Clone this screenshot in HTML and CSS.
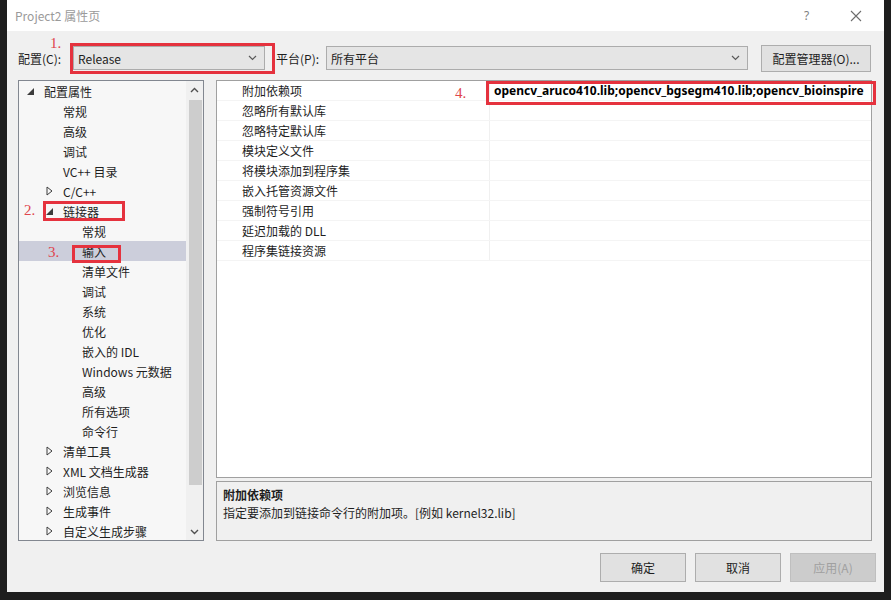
FILE: index.html
```html
<!DOCTYPE html>
<html>
<head>
  <title>Project2 属性页</title>
  <link rel="stylesheet" href="styles.css">
</head>
<body>

<div class="dialog">
  <div class="titlebar">
    <span class="title">Project2 属性页</span>
    <span class="help">?</span>
    <span class="close">
      <svg width="12" height="12" viewBox="0 0 12 12"><path d="M1 1 L11 11 M11 1 L1 11" stroke="#6d6d6d" stroke-width="1.1" fill="none"/></svg>
    </span>
  </div>

  <div class="configRow">
    <span class="fieldLabel">配置(C):</span>
    <div class="combo comboConfig">
      <span>Release</span>
      <svg class="chevron" width="9" height="6" viewBox="0 0 9 6"><path d="M1 1 L4.5 4.5 L8 1" stroke="#5a5a5a" stroke-width="1.2" fill="none"/></svg>
    </div>
    <span class="fieldLabel platformLabel">平台(P):</span>
    <div class="combo comboPlatform">
      <span>所有平台</span>
      <svg class="chevron" width="9" height="6" viewBox="0 0 9 6"><path d="M1 1 L4.5 4.5 L8 1" stroke="#5a5a5a" stroke-width="1.2" fill="none"/></svg>
    </div>
    <div class="btn btnManager">配置管理器(O)...</div>
  </div>

  <div class="main">
    <div class="tree">
      <div class="treeList">
        <div class="treeRow lvl0"><span class="exp"><svg width="7" height="7" viewBox="0 0 7 7"><path d="M7 0 L7 7 L0 7 Z" fill="#3c3c3c"/></svg></span>配置属性</div>
        <div class="treeRow lvl1"><span class="exp"></span>常规</div>
        <div class="treeRow lvl1"><span class="exp"></span>高级</div>
        <div class="treeRow lvl1"><span class="exp"></span>调试</div>
        <div class="treeRow lvl1"><span class="exp"></span>VC++ 目录</div>
        <div class="treeRow lvl1"><span class="exp"><svg width="7" height="10" viewBox="0 0 7 10"><path d="M1 1 L6 5 L1 9 Z" stroke="#3c3c3c" stroke-width="1" fill="none"/></svg></span>C/C++</div>
        <div class="treeRow lvl1"><span class="exp"><svg width="7" height="7" viewBox="0 0 7 7"><path d="M7 0 L7 7 L0 7 Z" fill="#3c3c3c"/></svg></span>链接器</div>
        <div class="treeRow lvl2"><span class="exp"></span>常规</div>
        <div class="treeRow lvl2 selected"><span class="exp"></span>输入</div>
        <div class="treeRow lvl2"><span class="exp"></span>清单文件</div>
        <div class="treeRow lvl2"><span class="exp"></span>调试</div>
        <div class="treeRow lvl2"><span class="exp"></span>系统</div>
        <div class="treeRow lvl2"><span class="exp"></span>优化</div>
        <div class="treeRow lvl2"><span class="exp"></span>嵌入的 IDL</div>
        <div class="treeRow lvl2"><span class="exp"></span>Windows 元数据</div>
        <div class="treeRow lvl2"><span class="exp"></span>高级</div>
        <div class="treeRow lvl2"><span class="exp"></span>所有选项</div>
        <div class="treeRow lvl2"><span class="exp"></span>命令行</div>
        <div class="treeRow lvl1"><span class="exp"><svg width="7" height="10" viewBox="0 0 7 10"><path d="M1 1 L6 5 L1 9 Z" stroke="#3c3c3c" stroke-width="1" fill="none"/></svg></span>清单工具</div>
        <div class="treeRow lvl1"><span class="exp"><svg width="7" height="10" viewBox="0 0 7 10"><path d="M1 1 L6 5 L1 9 Z" stroke="#3c3c3c" stroke-width="1" fill="none"/></svg></span>XML 文档生成器</div>
        <div class="treeRow lvl1"><span class="exp"><svg width="7" height="10" viewBox="0 0 7 10"><path d="M1 1 L6 5 L1 9 Z" stroke="#3c3c3c" stroke-width="1" fill="none"/></svg></span>浏览信息</div>
        <div class="treeRow lvl1"><span class="exp"><svg width="7" height="10" viewBox="0 0 7 10"><path d="M1 1 L6 5 L1 9 Z" stroke="#3c3c3c" stroke-width="1" fill="none"/></svg></span>生成事件</div>
        <div class="treeRow lvl1"><span class="exp"><svg width="7" height="10" viewBox="0 0 7 10"><path d="M1 1 L6 5 L1 9 Z" stroke="#3c3c3c" stroke-width="1" fill="none"/></svg></span>自定义生成步骤</div>
      </div>
      <div class="scrollbar">
        <div class="scrollArrow"><svg width="9" height="6" viewBox="0 0 9 6"><path d="M1 5 L4.5 1.5 L8 5" stroke="#505050" stroke-width="1.4" fill="none"/></svg></div>
        <div class="scrollTrack"><div class="scrollThumb"></div></div>
        <div class="scrollArrow"><svg width="9" height="6" viewBox="0 0 9 6"><path d="M1 1 L4.5 4.5 L8 1" stroke="#505050" stroke-width="1.4" fill="none"/></svg></div>
      </div>
    </div>

    <div class="props">
      <div class="grid">
        <div class="gridRow"><div class="propName">附加依赖项</div><div class="propValue">opencv_aruco410.lib;opencv_bgsegm410.lib;opencv_bioinspire</div></div>
        <div class="gridRow"><div class="propName">忽略所有默认库</div><div class="propValue"></div></div>
        <div class="gridRow"><div class="propName">忽略特定默认库</div><div class="propValue"></div></div>
        <div class="gridRow"><div class="propName">模块定义文件</div><div class="propValue"></div></div>
        <div class="gridRow"><div class="propName">将模块添加到程序集</div><div class="propValue"></div></div>
        <div class="gridRow"><div class="propName">嵌入托管资源文件</div><div class="propValue"></div></div>
        <div class="gridRow"><div class="propName">强制符号引用</div><div class="propValue"></div></div>
        <div class="gridRow"><div class="propName">延迟加载的 DLL</div><div class="propValue"></div></div>
        <div class="gridRow"><div class="propName">程序集链接资源</div><div class="propValue"></div></div>
      </div>
      <div class="desc">
        <div class="descTitle">附加依赖项</div>
        <div class="descText">指定要添加到链接命令行的附加项。[例如 kernel32.lib]</div>
      </div>
    </div>
  </div>

  <div class="buttons">
    <div class="btn btnDialog">确定</div>
    <div class="btn btnDialog">取消</div>
    <div class="btn btnDialog disabled">应用(A)</div>
  </div>

  <!-- red markers drawn over the screenshot -->
  <span class="mark num1">1.</span>
  <span class="markBox box1"></span>
  <span class="mark num2">2.</span>
  <span class="markBox box2"></span>
  <span class="mark num3">3.</span>
  <span class="markBox box3"></span>
  <span class="mark num4">4.</span>
  <span class="markBox box4"></span>
</div>

</body>
</html>
```

FILE: styles.css
```css
html, body {
  margin: 0;
  padding: 0;
}

body {
  background-color: #1e1e1e;
  width: 891px;
  height: 600px;
  overflow: hidden;
  font-family: "Noto Sans CJK SC", "Noto Sans", sans-serif;
  font-size: 12px;
  color: #1e1e1e;
}

.dialog {
  position: relative;
  margin-left: 7px;
  width: 877px;
  height: 592px;
  background-color: #f0f0f0;
  display: flex;
  flex-direction: column;
}

.titlebar {
  height: 31px;
  background-color: #ffffff;
  display: flex;
  align-items: center;
  padding-left: 8px;
  flex-shrink: 0;
}

.title {
  color: #9a9a9a;
  font-size: 12px;
  flex: 1;
}

.help {
  color: #808080;
  font-family: "Noto Sans", sans-serif;
  font-size: 12px;
  width: 20px;
  margin-right: 26px;
}

.close {
  display: flex;
  width: 24px;
  margin-right: 10px;
}

.configRow {
  display: flex;
  align-items: center;
  padding: 15px 0 0 11px;
  height: 24px;
  flex-shrink: 0;
}

.fieldLabel {
  width: 55px;
}

.platformLabel {
  margin-left: 11px;
  width: 50px;
}

.combo {
  height: 24px;
  box-sizing: border-box;
  border: 1px solid #acacac;
  background-color: #e5e5e5;
  display: flex;
  align-items: center;
  padding-left: 4px;
  padding-right: 7px;
}

.combo span {
  flex: 1;
}

.comboConfig {
  width: 192px;
}

.comboPlatform {
  width: 422px;
}

.btn {
  box-sizing: border-box;
  border: 1px solid #adadad;
  background-color: #e1e1e1;
  display: flex;
  align-items: center;
  justify-content: center;
  flex-shrink: 0;
}

.btnManager {
  width: 110px;
  height: 27px;
  margin-left: 13px;
}

.main {
  display: flex;
  gap: 12px;
  padding-left: 11px;
  margin-top: 10px;
  height: 461px;
  flex-shrink: 0;
}

.tree {
  width: 186px;
  box-sizing: border-box;
  border: 1px solid #828790;
  background-color: #f7f7f7;
  display: flex;
  overflow: hidden;
}

.treeList {
  flex: 1;
  overflow: hidden;
}

.treeRow {
  height: 20px;
  display: flex;
  align-items: center;
  white-space: nowrap;
  padding-left: 6px;
}

.lvl1 {
  padding-left: 25px;
}

.lvl2 {
  padding-left: 44px;
}

.exp {
  width: 19px;
  display: flex;
  align-items: center;
  padding-left: 2px;
  box-sizing: border-box;
}

.selected {
  background-color: #cccedb;
}

.scrollbar {
  width: 17px;
  background-color: #f0f0f0;
  display: flex;
  flex-direction: column;
}

.scrollArrow {
  height: 17px;
  display: flex;
  align-items: center;
  justify-content: center;
}

.scrollTrack {
  flex: 1;
  padding: 2px 1px 0 3px;
}

.scrollThumb {
  height: 385px;
  background-color: #cdcdcd;
}

.props {
  width: 656px;
  display: flex;
  flex-direction: column;
}

.grid {
  height: 398px;
  box-sizing: border-box;
  border: 1px solid #a0a0a0;
  background-color: #ffffff;
}

.gridRow {
  display: flex;
  height: 20px;
  box-sizing: border-box;
  border-bottom: 1px solid #f4f4f4;
}

.propName {
  width: 273px;
  padding-left: 25px;
  box-sizing: border-box;
  border-right: 1px solid #f0f0f0;
  display: flex;
  align-items: center;
  white-space: nowrap;
}

.propValue {
  flex: 1;
  padding-left: 4px;
  font-family: "Noto Sans", sans-serif;
  font-weight: 700;
  font-size: 12px;
  display: flex;
  align-items: center;
  white-space: nowrap;
  overflow: hidden;
  color: #000000;
}

.desc {
  margin-top: 3px;
  height: 60px;
  box-sizing: border-box;
  border: 1px solid #a0a0a0;
  padding: 4px 6px;
}

.descTitle {
  font-weight: 700;
  line-height: 18px;
}

.descText {
  line-height: 18px;
}

.buttons {
  display: flex;
  justify-content: flex-end;
  gap: 9px;
  padding-right: 8px;
  margin-top: 12px;
}

.btnDialog {
  width: 86px;
  height: 29px;
}

.disabled {
  background-color: #cccccc;
  border-color: #bfbfbf;
  color: #a0a0a0;
}

.mark {
  position: absolute;
  font-family: "Liberation Serif", serif;
  font-size: 15px;
  color: #e0454d;
  line-height: 16px;
}

.markBox {
  position: absolute;
  box-sizing: border-box;
  border: 3px solid #e5323e;
}

.num1 { left: 43px; top: 35px; }
.box1 { left: 63px; top: 43px; width: 205px; height: 31px; }

.num2 { left: 17px; top: 202px; }
.box2 { left: 36px; top: 201px; width: 82px; height: 20px; }

.num3 { left: 41px; top: 244px; }
.box3 { left: 65px; top: 245px; width: 49px; height: 18px; }

.num4 { left: 448px; top: 85px; }
.box4 { left: 479px; top: 81px; width: 390px; height: 24px; }
```
